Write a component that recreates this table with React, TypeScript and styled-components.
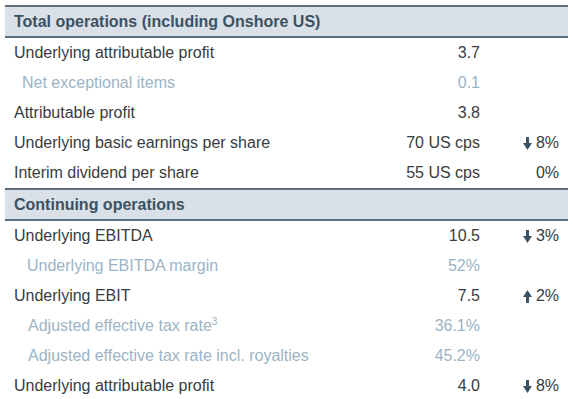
import styled, { createGlobalStyle } from "styled-components";

const GlobalStyle = createGlobalStyle`
  html, body { margin: 0; padding: 0; background: #ffffff; }
  body { font-family: "Liberation Sans", Arial, sans-serif; }
`;

type Row = {
  label: string;
  sup?: string;
  value: string;
  change?: string;
  dir?: "up" | "down";
  indent?: number;
};

type Section = { title: string; rows: Row[] };

const sections: Section[] = [
  {
    title: "Total operations (including Onshore US)",
    rows: [
      { label: "Underlying attributable profit", value: "3.7" },
      { label: "Net exceptional items", value: "0.1", indent: 8 },
      { label: "Attributable profit", value: "3.8" },
      { label: "Underlying basic earnings per share", value: "70 US cps", change: "8%", dir: "down" },
      { label: "Interim dividend per share", value: "55 US cps", change: "0%" },
    ],
  },
  {
    title: "Continuing operations",
    rows: [
      { label: "Underlying EBITDA", value: "10.5", change: "3%", dir: "down" },
      { label: "Underlying EBITDA margin", value: "52%", indent: 13 },
      { label: "Underlying EBIT", value: "7.5", change: "2%", dir: "up" },
      { label: "Adjusted effective tax rate", sup: "3", value: "36.1%", indent: 14 },
      { label: "Adjusted effective tax rate incl. royalties", value: "45.2%", indent: 14 },
      { label: "Underlying attributable profit", value: "4.0", change: "8%", dir: "down" },
    ],
  },
];

const Table = styled.div`
  width: 563px;
  padding: 5px 5px 0 5px;
`;

const Header = styled.div`
  height: 29px;
  display: flex;
  align-items: center;
  padding-left: 9px;
  background: #d9e0e7;
  border-top: 2px solid #5b6f7e;
  border-bottom: 2px solid #5b6f7e;
  color: #3b5262;
  font-size: 16px;
  font-weight: 700;
`;

const RowLine = styled.div<{ $muted: boolean }>`
  height: 30px;
  display: grid;
  grid-template-columns: 1fr 120px 88px;
  align-items: center;
  font-size: 16px;
  color: ${(p) => (p.$muted ? "#9bb4c6" : "#383c40")};
`;

const Label = styled.div<{ $indent: number }>`
  padding-left: ${(p) => 9 + p.$indent}px;
  white-space: nowrap;
  sup {
    font-size: 10px;
    vertical-align: 6px;
    line-height: 0;
  }
`;

const Value = styled.div`
  text-align: right;
  white-space: nowrap;
`;

const Change = styled.div`
  display: flex;
  justify-content: flex-end;
  align-items: center;
  gap: 4px;
  padding-right: 9px;
  color: #383c40;
`;

const Arrow = ({ dir }: { dir: "up" | "down" }) => (
  <svg
    width="9"
    height="13"
    viewBox="0 0 9 13"
    style={{ transform: dir === "up" ? "rotate(180deg)" : undefined }}
  >
    <rect x="3" y="0" width="3" height="7" fill="#3b5262" />
    <polygon points="0,6 9,6 4.5,13" fill="#3b5262" />
  </svg>
);

export default function App() {
  return (
    <>
      <GlobalStyle />
      <Table>
        {sections.map((s) => (
          <div key={s.title}>
            <Header>{s.title}</Header>
            {s.rows.map((r) => (
              <RowLine key={r.label + r.value} $muted={!!r.indent}>
                <Label $indent={r.indent ?? 0}>
                  {r.label}
                  {r.sup && <sup>{r.sup}</sup>}
                </Label>
                <Value>{r.value}</Value>
                <Change>
                  {r.dir && <Arrow dir={r.dir} />}
                  {r.change}
                </Change>
              </RowLine>
            ))}
          </div>
        ))}
      </Table>
    </>
  );
}
